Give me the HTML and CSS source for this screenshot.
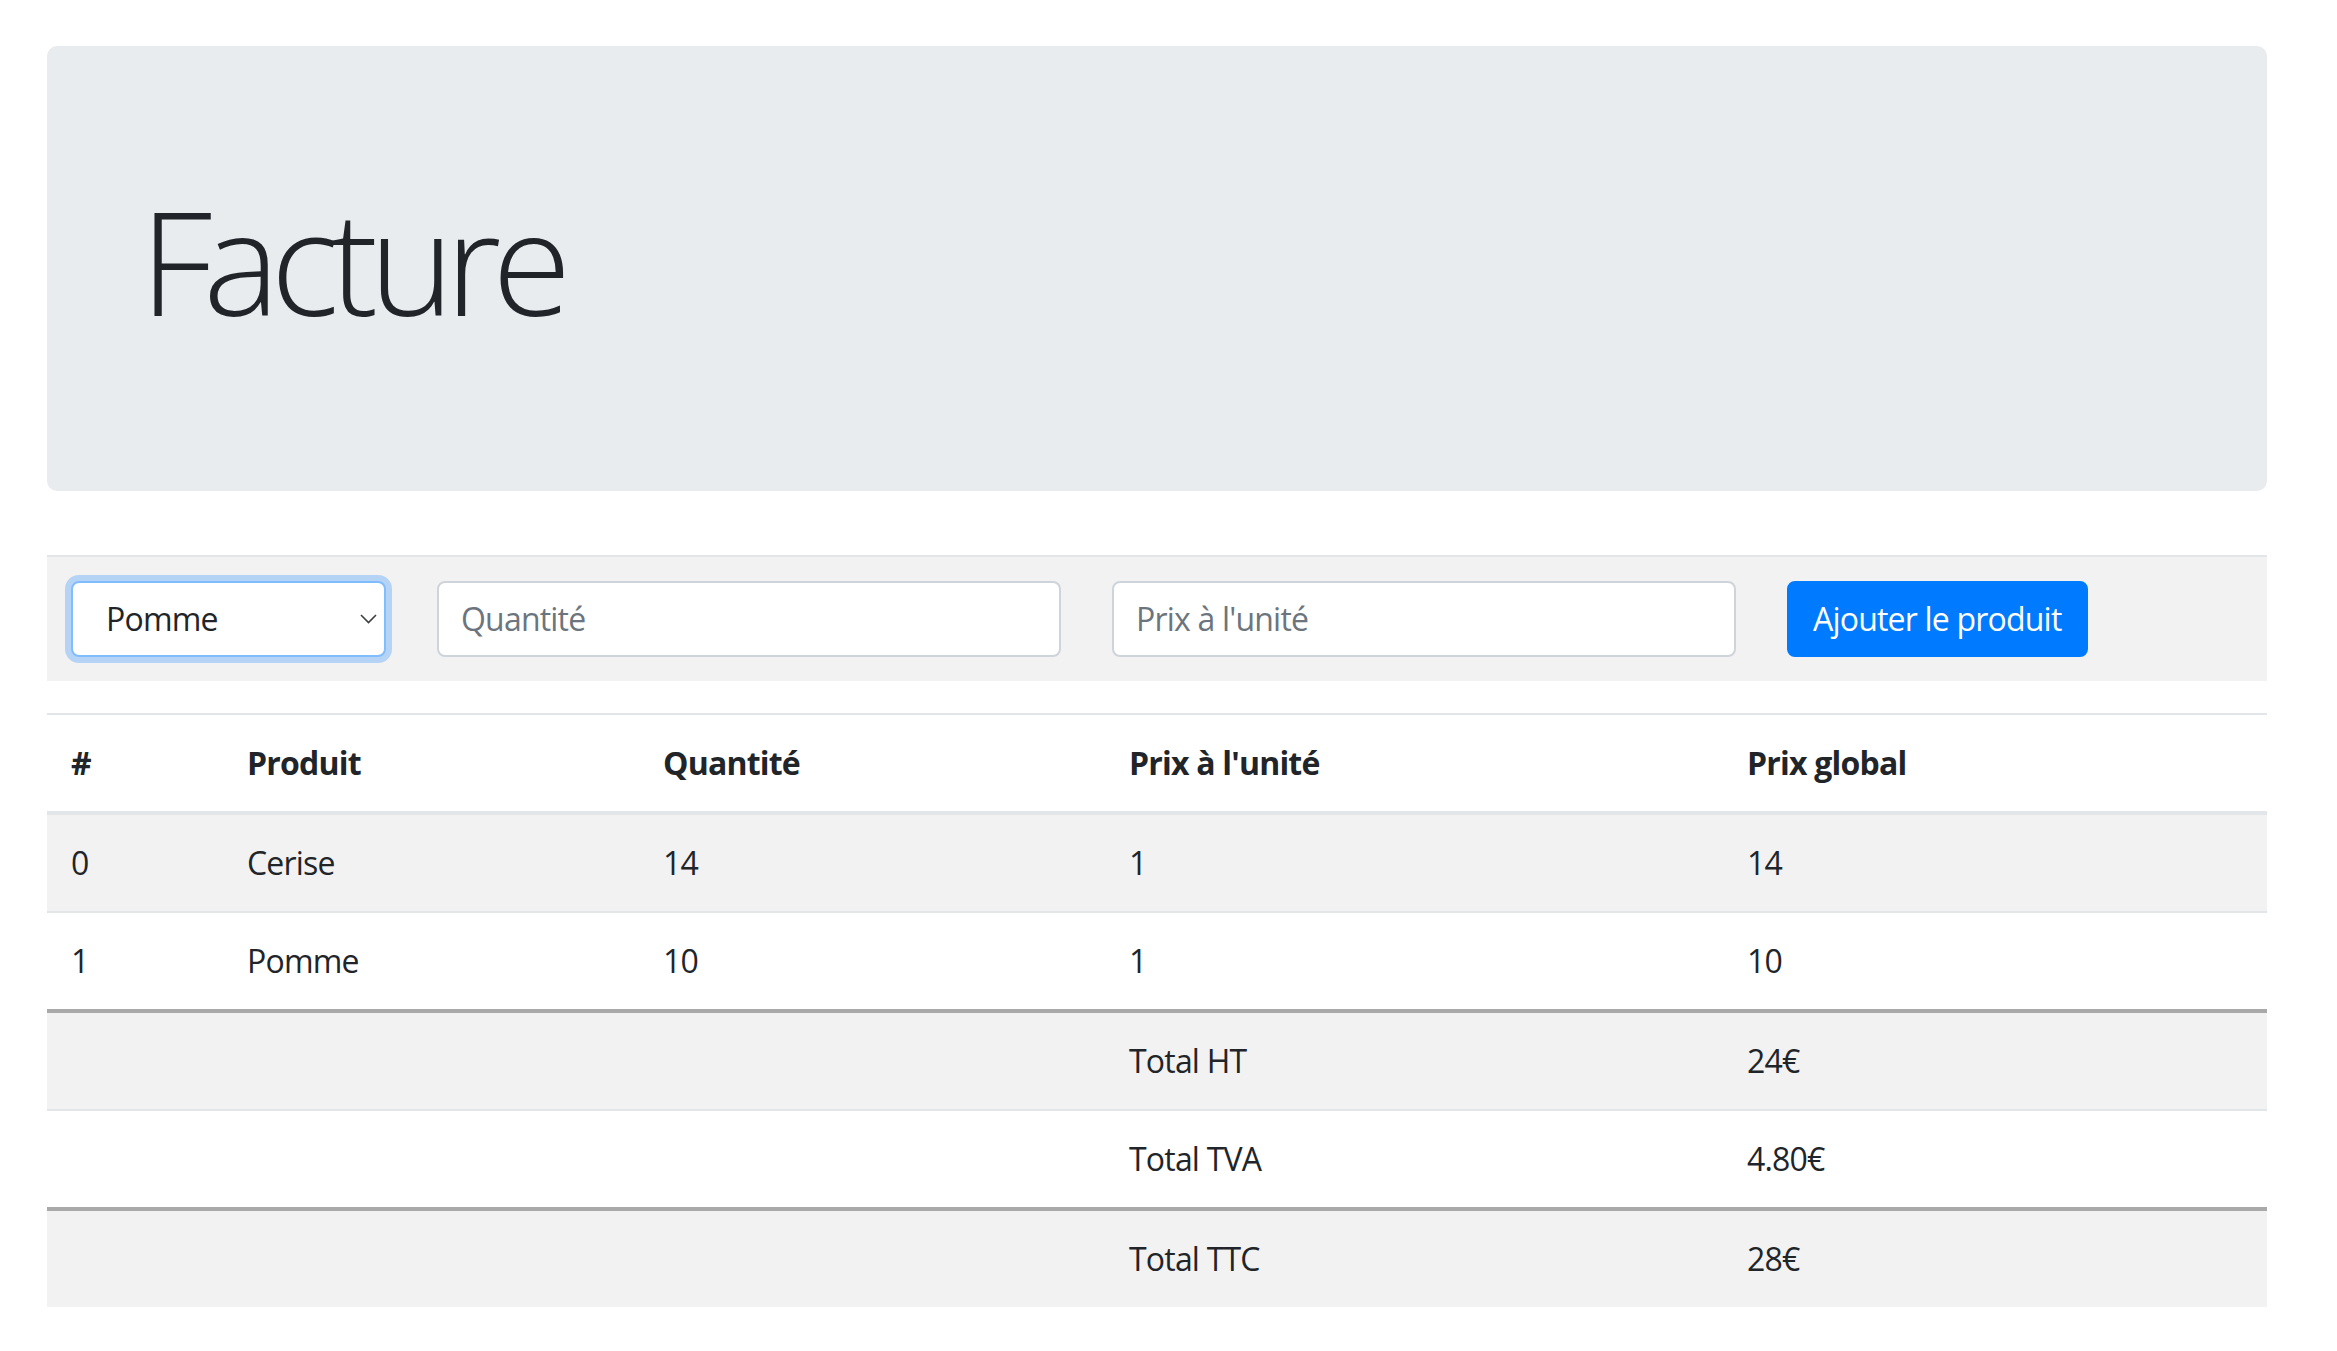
FILE: index.html
```html
<!DOCTYPE html>
<html lang="fr">
<head>
<meta charset="utf-8">
<title>Facture</title>
<link rel="stylesheet" href="styles.css">
</head>
<body>
<div class="page">
  <div class="jumbotron">
    <h1 class="display">Facture</h1>
  </div>

  <table class="form-table">
    <tr>
      <td>
        <div class="form-row">
          <div class="select-wrap">
            <select class="select">
              <option>Pomme</option>
              <option>Cerise</option>
            </select>
            <svg class="chevron" width="17" height="10" viewBox="0 0 17 10"><path d="M1 1 L8.5 8.5 L16 1" fill="none" stroke="#3c4043" stroke-width="1.6"/></svg>
          </div>
          <input class="field" type="text" placeholder="Quantité">
          <input class="field" type="text" placeholder="Prix à l'unité">
          <button class="btn" type="button">Ajouter le produit</button>
        </div>
      </td>
    </tr>
  </table>

  <table class="invoice">
    <colgroup>
      <col class="c1"><col class="c2"><col class="c3"><col class="c4"><col class="c5">
    </colgroup>
    <thead>
      <tr><th>#</th><th>Produit</th><th>Quantité</th><th>Prix à l'unité</th><th>Prix global</th></tr>
    </thead>
    <tbody>
      <tr><td>0</td><td>Cerise</td><td>14</td><td>1</td><td>14</td></tr>
      <tr><td>1</td><td>Pomme</td><td>10</td><td>1</td><td>10</td></tr>
      <tr class="sep"><td></td><td></td><td></td><td>Total HT</td><td>24€</td></tr>
      <tr><td></td><td></td><td></td><td>Total TVA</td><td>4.80€</td></tr>
      <tr class="sep"><td></td><td></td><td></td><td>Total TTC</td><td>28€</td></tr>
    </tbody>
  </table>
</div>
</body>
</html>
```

FILE: styles.css
```css
* { box-sizing: border-box; }

body {
  margin: 0;
  font-family: "Open Sans", "Noto Sans", sans-serif;
  font-size: 32px;
  line-height: 1.5;
  letter-spacing: -0.8px;
  color: #212529;
  background: #fff;
}

.page {
  width: 2220px;
  margin: 46px 0 0 47px;
}

.jumbotron {
  background: #e9ecef;
  border-radius: 10px;
  padding: 128px 64px;
  margin-bottom: 64px;
}

.display {
  margin: 0 0 16px;
  padding-left: 29px;
  font-size: 144px;
  font-weight: 300;
  line-height: 1.2;
  letter-spacing: -9px;
}

.form-table {
  width: 100%;
  border-collapse: collapse;
  margin-bottom: 32px;
}

.form-table td {
  padding: 24px;
  border-top: 2px solid #e3e6e9;
  background: #f2f2f2;
}

.form-row {
  display: flex;
  align-items: center;
  gap: 51px;
}

.select-wrap {
  position: relative;
  width: 315px;
  height: 76px;
}

.select {
  appearance: none;
  -webkit-appearance: none;
  width: 100%;
  height: 76px;
  margin: 0;
  padding: 0 40px 0 33px;
  font: inherit;
  letter-spacing: inherit;
  color: #212529;
  background: #fff;
  border: 2px solid #80bdff;
  border-radius: 8px;
  box-shadow: 0 0 0 6px rgba(0, 123, 255, 0.25);
  outline: none;
}

.chevron {
  position: absolute;
  right: 9px;
  top: 33px;
}

.field {
  width: 624px;
  height: 76px;
  margin: 0;
  padding: 12px 22px;
  font: inherit;
  letter-spacing: inherit;
  color: #495057;
  background: #fff;
  border: 2px solid #ced4da;
  border-radius: 8px;
  outline: none;
}

.field::placeholder {
  color: #6c757d;
  opacity: 1;
}

.btn {
  height: 76px;
  margin: 0;
  padding: 12px 24px;
  font: inherit;
  letter-spacing: inherit;
  color: #fff;
  background: #007bff;
  border: 2px solid #007bff;
  border-radius: 8px;
  white-space: nowrap;
}

.invoice {
  width: 100%;
  border-collapse: collapse;
  table-layout: fixed;
}

.invoice .c1 { width: 176px; }
.invoice .c2 { width: 416px; }
.invoice .c3 { width: 466px; }
.invoice .c4 { width: 618px; }
.invoice .c5 { width: 544px; }

.invoice th,
.invoice td {
  padding: 24px;
  text-align: left;
  vertical-align: top;
  border-top: 2px solid #e3e6e9;
  height: 98px;
}

.invoice th {
  font-weight: 700;
  border-bottom: 4px solid #e3e6e9;
}

.invoice tbody tr:nth-child(odd) {
  background: #f2f2f2;
}

.invoice tr.sep td {
  border-top: 4px solid #a9a9a9;
}
```
